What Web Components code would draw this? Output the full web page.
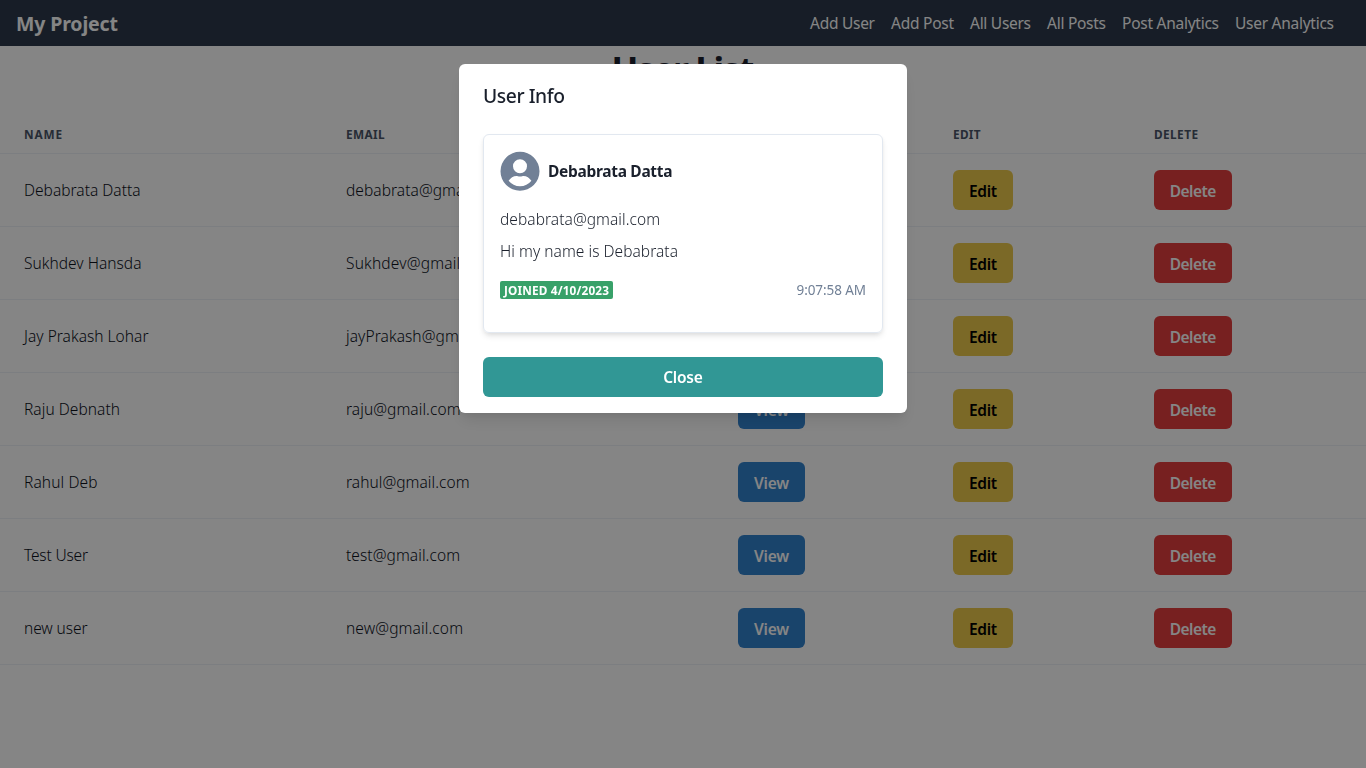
<!DOCTYPE html>
<html lang="en">
<head>
<meta charset="utf-8">
<title>My Project</title>
<style>
  html, body { margin: 0; height: 100%; overflow: hidden; background: #fff; color: #1a202c;
    font-family: "Noto Sans", "Open Sans", sans-serif; font-size: 15.5px; line-height: 24px; }
</style>
</head>
<body>
<app-page></app-page>
<script>
const define = (name, html, setup) => {
  const tpl = document.createElement('template');
  tpl.innerHTML = html;
  customElements.define(name, class extends HTMLElement {
    connectedCallback() {
      if (this.shadowRoot) return;
      this.attachShadow({ mode: 'open' }).append(tpl.content.cloneNode(true));
      if (setup) setup(this, this.shadowRoot);
    }
  });
};

/* A run of text tracked so that it takes the given width. */
define('fit-text', `<style>
  :host { display: inline-block; white-space: nowrap; }
  span { display: inline-block; }
</style><span><slot></slot></span>`, (host, root) => {
  const span = root.querySelector('span');
  const n = host.textContent.length - 1;
  const ls = (parseFloat(host.getAttribute('w')) - span.getBoundingClientRect().width) / n;
  span.style.letterSpacing = ls + 'px';
  span.style.marginRight = -ls + 'px';
});

define('nav-bar', `<style>
  :host { display: flex; align-items: center; justify-content: space-between; height: 46px;
    padding: 0 32px 0 16px; background: #2c394b; color: #fff; box-sizing: border-box; }
  .brand { font-size: 19.5px; font-weight: 700; line-height: 28px; padding-top: 1px; }
  nav { display: flex; gap: 16px; }
</style>
<div class="brand"><fit-text w="102">My Project</fit-text></div>
<nav>
  <fit-text w="65">Add User</fit-text><fit-text w="63">Add Post</fit-text>
  <fit-text w="61">All Users</fit-text><fit-text w="59">All Posts</fit-text>
  <fit-text w="97">Post Analytics</fit-text><fit-text w="99">User Analytics</fit-text>
</nav>`);

define('action-button', `<style>
  :host { display: inline-flex; align-items: center; justify-content: center; height: 40px;
    padding: 2px 0 0; border-radius: 6px; font-weight: 600; color: #fff; box-sizing: border-box; }
  :host([kind=view]) { background: #3182ce; width: 67px; }
  :host([kind=edit]) { background: #ecc94b; width: 60px; color: #000; }
  :host([kind=delete]) { background: #e53e3e; width: 78px; }
  :host([kind=close]) { background: #319795; width: 100%; padding-top: 0; }
</style><slot></slot>`);

define('user-table', `<style>
  :host { display: block; }
  .row { display: grid; grid-template-columns: 322px 392px 215px 201px 1fr; height: 73px; font-weight: 350;
    align-items: center; border-bottom: 1px solid #edf2f7; box-sizing: border-box; color: #0c111c; }
  .row > * { padding-left: 24px; }
  .row .act { display: flex; }
  .row.head { height: 41px; padding-top: 2px; font-size: 11.8px; line-height: 16px; font-weight: 700; color: #4a5568; }
</style>
<div class="row head">
  <div><fit-text w="38">NAME</fit-text></div><div><fit-text w="38.5">EMAIL</fit-text></div><div><fit-text w="34">VIEW</fit-text></div>
  <div><fit-text w="27.500">EDIT</fit-text></div><div><fit-text w="44">DELETE</fit-text></div>
</div>`, (host, root) => {
  [['Debabrata Datta', 116.5, 'debabrata@gmail.com', 160],
   ['Sukhdev Hansda', 117.5, 'Sukhdev@gmail.com', 149],
   ['Jay Prakash Lohar', 124.5, 'jayPrakash@gmail.com', 163],
   ['Raju Debnath', 96, 'raju@gmail.com', 114.5],
   ['Rahul Deb', 73.5, 'rahul@gmail.com', 123.5],
   ['Test User', 64, 'test@gmail.com', 114],
   ['new user', 63.5, 'new@gmail.com', 117]].forEach(([name, nw, mail, mw]) => {
    const row = document.createElement('div');
    row.className = 'row';
    row.innerHTML = `<div><fit-text w="${nw}">${name}</fit-text></div>
      <div><fit-text w="${mw}">${mail}</fit-text></div>
      <div class="act"><action-button kind="view"><fit-text w="35">View</fit-text></action-button></div>
      <div class="act"><action-button kind="edit"><fit-text w="28">Edit</fit-text></action-button></div>
      <div class="act"><action-button kind="delete"><fit-text w="46.5">Delete</fit-text></action-button></div>`;
    root.append(row);
  });
});

define('user-card', `<style>
  :host { display: flex; flex-direction: column; height: 199px; padding: 16px; box-sizing: border-box;
    border: 1px solid #e2e8f0; border-radius: 6px;
    box-shadow: 0 4px 6px -1px rgba(0,0,0,.1), 0 2px 4px -1px rgba(0,0,0,.06); }
  .who { display: flex; align-items: center; gap: 8px; height: 40px; font-weight: 700; margin-bottom: 16px; }
  svg { width: 40px; height: 40px; fill: #718096; }
  p { margin: 0 0 8px; font-weight: 350; }
  .meta { display: flex; justify-content: space-between; align-items: center; margin-top: 8px; height: 22px; }
  .badge { display: flex; justify-content: center; width: 113px; height: 18px; line-height: 19px; border-radius: 2px;
    background: #38a169; color: #fff; font-size: 11.8px; font-weight: 700; }
  .time { color: #718096; font-size: 13.5px; line-height: 21px; }
</style>
<div class="who">
  <svg viewBox="0 0 40 40"><path fill-rule="evenodd" d="M20 .7a19.5 19.5 0 1 0 0 39 19.5 19.5 0 0 0 0-39ZM20 8.200a7 7 0 1 1 0 14 7 7 0 0 1 0-14ZM20 35.300c-4.500 0-8.600-2-11.400-5.500 1.700-2.900 5-4.900 7.800-4.900.8 0 1.900.7 3.600.7s2.800-.7 3.600-.7c2.800 0 6.100 2 7.800 4.900A14.600 14.600 0 0 1 20 35.300Z"/></svg>
  <fit-text w="124.500">Debabrata Datta</fit-text>
</div>
<p><fit-text w="160">debabrata@gmail.com</fit-text></p>
<p><fit-text w="178">Hi my name is Debabrata</fit-text></p>
<div class="meta"><div class="badge"><fit-text w="105">JOINED 4/10/2023</fit-text></div>
<div class="time"><fit-text w="69.500">9:07:58 AM</fit-text></div></div>`);

define('info-modal', `<style>
  :host { position: fixed; inset: 0; display: flex; justify-content: center; align-items: flex-start;
    padding-top: 64px; background: rgba(0,0,0,.48); box-sizing: border-box; }
  section { width: 448px; height: 349px; box-sizing: border-box; padding: 17px 24px 16px; background: #fff;
    border-radius: 6px; display: flex; flex-direction: column;
    box-shadow: 0 10px 15px -3px rgba(0,0,0,.1), 0 4px 6px -2px rgba(0,0,0,.05); }
  header { height: 53px; font-size: 19.3px; line-height: 30px; font-weight: 500; }
  user-card { margin-bottom: 24px; }
</style>
<section role="dialog">
  <header><fit-text w="82">User Info</fit-text></header>
  <user-card></user-card>
  <action-button kind="close"><fit-text w="39.500">Close</fit-text></action-button>
</section>`);

define('app-page', `<style>
  :host { display: block; }
  h1 { margin: 0; height: 67px; padding-top: 2px; box-sizing: border-box; text-align: center; font-size: 35.500px; line-height: 43px; font-weight: 700; }
</style>
<nav-bar></nav-bar>
<h1><fit-text w="143">User List</fit-text></h1>
<user-table></user-table>
<info-modal></info-modal>`);
</script>
</body>
</html>
